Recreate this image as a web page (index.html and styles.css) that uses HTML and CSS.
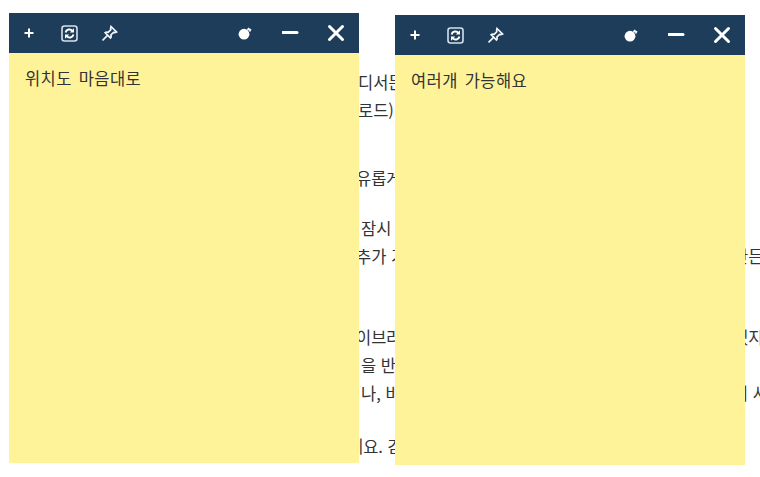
FILE: index.html
```html
<!DOCTYPE html>
<html lang="ko">
<head>
<meta charset="utf-8">
<title>메모</title>
<link rel="stylesheet" href="styles.css">
</head>
<body>
<main class="article">
  <div class="line at-358 first"><span>디서든</span></div>
  <div class="line at-358"><span>로드)</span></div>
  <div class="line at-356 gap-2"><span>유롭게</span></div>
  <div class="line at-361 gap-1"><span>잠시</span></div>
  <div class="line at-356"><span>추가 기</span><span class="far">만든</span></div>
  <div class="line at-356 gap-3"><span>이브러</span><span class="far">겠지</span></div>
  <div class="line at-361"><span>을 반</span></div>
  <div class="line at-361"><span>나, 바</span><span class="far">니 사</span></div>
  <div class="line at-348 gap-4"><span>네요. 감</span></div>
</main>

<section class="note note-a">
  <header class="bar">
    <button class="tool"><svg width="16" height="16" viewBox="0 0 16 16"><path class="ink" d="M8 3.5v9M3.5 8h9"/></svg></button>
    <button class="tool"><svg width="17" height="17" viewBox="0 0 17 17"><rect class="frame" x="1" y="1" width="15" height="15" rx="2.5"/><path class="ink thin" d="M4.6 7.5a3.9 3.9 0 0 1 6.8-1.7M12.4 9.5a3.9 3.9 0 0 1-6.8 1.7"/><path class="fill" d="M13 3.2v4.2H8.8zM4 13.8V9.6h4.2z"/></svg></button>
    <button class="tool"><svg width="17" height="17" viewBox="1 0 17 17"><path class="line-ink" d="M10 1.5l5.5 5.5-1.6.6-1.4-.2-2.6 2.6q.6 2-.4 3L4.2 7.7q1-1 3-.4l2.6-2.6-.2-1.4zM6.3 10.7L1.5 15.5"/></svg></button>
    <span class="spacer"></span>
    <button class="tool wide"><svg width="16" height="16" viewBox="0 0 16 16"><circle class="fill" cx="7" cy="9.2" r="5.4"/><path class="line-ink" d="M10.5 5.4l1-1.8 1.9 1.1-1 1.8"/></svg></button>
    <button class="tool wide"><svg width="18" height="18" viewBox="0 0 18 18"><path class="ink bold" d="M1 8.5h14"/></svg></button>
    <button class="tool wide"><svg width="18" height="18" viewBox="0 0 18 18"><path class="ink bold" d="M2.5 2.5l13 13M15.5 2.5l-13 13"/></svg></button>
  </header>
  <div class="memo">위치도 마음대로</div>
</section>

<section class="note note-b">
  <header class="bar">
    <button class="tool"><svg width="16" height="16" viewBox="0 0 16 16"><path class="ink" d="M8 3.5v9M3.5 8h9"/></svg></button>
    <button class="tool"><svg width="17" height="17" viewBox="0 0 17 17"><rect class="frame" x="1" y="1" width="15" height="15" rx="2.5"/><path class="ink thin" d="M4.6 7.5a3.9 3.9 0 0 1 6.8-1.7M12.4 9.5a3.9 3.9 0 0 1-6.8 1.7"/><path class="fill" d="M13 3.2v4.2H8.8zM4 13.8V9.6h4.2z"/></svg></button>
    <button class="tool"><svg width="17" height="17" viewBox="1 0 17 17"><path class="line-ink" d="M10 1.5l5.5 5.5-1.6.6-1.4-.2-2.6 2.6q.6 2-.4 3L4.2 7.7q1-1 3-.4l2.6-2.6-.2-1.4zM6.3 10.7L1.5 15.5"/></svg></button>
    <span class="spacer"></span>
    <button class="tool wide"><svg width="16" height="16" viewBox="0 0 16 16"><circle class="fill" cx="7" cy="9.2" r="5.4"/><path class="line-ink" d="M10.5 5.4l1-1.8 1.9 1.1-1 1.8"/></svg></button>
    <button class="tool wide"><svg width="18" height="18" viewBox="0 0 18 18"><path class="ink bold" d="M1 8.5h14"/></svg></button>
    <button class="tool wide"><svg width="18" height="18" viewBox="0 0 18 18"><path class="ink bold" d="M2.5 2.5l13 13M15.5 2.5l-13 13"/></svg></button>
  </header>
  <div class="memo">여러개 가능해요</div>
</section>
</body>
</html>
```

FILE: styles.css
```css
html, body {
  margin: 0;
  height: 100%;
  background: #fff;
  overflow: hidden;
}
body {
  font-family: "Noto Sans CJK KR", "Noto Sans", sans-serif;
  font-size: 16.5px;
  color: #333;
}
.article {
  padding-top: 68px;
}
.line {
  display: grid;
  height: 28px;
  line-height: 28px;
  white-space: nowrap;
}
.gap-1 { margin-top: 22px; }
.gap-2 { margin-top: 40px; }
.gap-3 { margin-top: 53px; }
.gap-4 { margin-top: 25px; }
.at-348 { padding-left: 348px; grid-template-columns: 385px 60px; }
.at-356 { padding-left: 356px; grid-template-columns: 377px 60px; }
.at-358 { padding-left: 358px; grid-template-columns: 375px 60px; }
.at-361 { padding-left: 361px; grid-template-columns: 372px 60px; }

.note {
  position: absolute;
  width: 350px;
  height: 450px;
  display: flex;
  flex-direction: column;
  background: #fff39a;
}
.note-a { left: 9px; top: 13px; }
.note-b { left: 395px; top: 15px; }
.bar {
  display: flex;
  align-items: center;
  height: 40px;
  flex: none;
  background: #1d3d5a;
}
.spacer { flex: 1; }
.tool {
  width: 40.5px;
  height: 40px;
  padding: 0;
  border: 0;
  background: none;
  display: flex;
  align-items: center;
  justify-content: center;
}
.tool.wide { width: 45.5px; }
.ink {
  fill: none;
  stroke: #fff;
  stroke-width: 2;
}
.ink.thin { stroke-width: 2; }
.ink.bold { stroke-width: 3; stroke-linecap: round; }
.frame {
  fill: none;
  stroke: #d5e0ec;
  stroke-width: 1.6;
}
.fill { fill: #fff; }
.line-ink {
  fill: none;
  stroke: #f2f6fa;
  stroke-width: 1.7;
}
.memo {
  padding: 13px 16px;
  line-height: 24px;
  letter-spacing: 0.4px;
  word-spacing: 2px;
  color: #333;
}
```
